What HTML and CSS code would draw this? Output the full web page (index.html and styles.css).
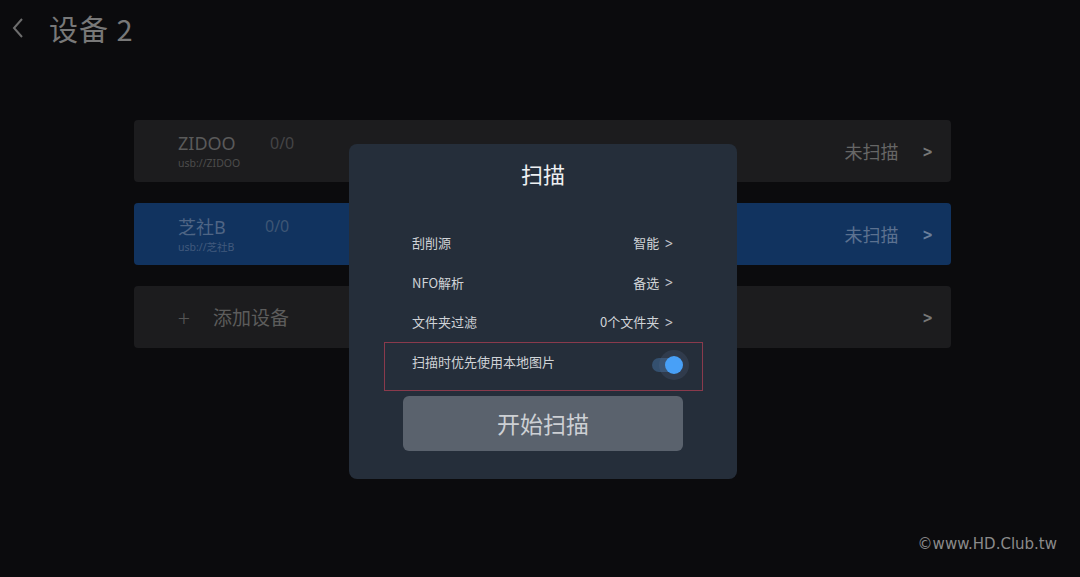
FILE: index.html
```html
<!DOCTYPE html>
<html lang="zh">
 <head>
  <meta charset="utf-8">
  <title>设备 2</title>
  <link rel="stylesheet" href="styles.css">
 </head>
 <body>
  <div class="header">
   <svg class="back" width="14" height="22" viewBox="0 0 14 22">
    <path d="M11 2 L3 11 L11 20" fill="none" stroke="#6d6d6d" stroke-width="2"/>
   </svg>
   <span class="title">设备 2</span>
  </div>

  <div class="devices">
   <div class="device">
    <div class="name">
     <div class="line"><span class="label">ZIDOO</span><span class="count">0/0</span></div>
     <div class="path">usb://ZIDOO</div>
    </div>
    <span class="state">未扫描</span>
    <span class="arrow">&gt;</span>
   </div>
   <div class="device active">
    <div class="name">
     <div class="line"><span class="label">芝社B</span><span class="count">0/0</span></div>
     <div class="path">usb://芝社B</div>
    </div>
    <span class="state">未扫描</span>
    <span class="arrow">&gt;</span>
   </div>
   <div class="device add">
    <div class="name">
     <div class="line"><span class="plus">+</span><span class="label big">添加设备</span></div>
    </div>
    <span class="arrow">&gt;</span>
   </div>
  </div>

  <div class="dialog">
   <div class="dialogTitle">扫描</div>
   <div class="options">
    <div class="option">
     <span>刮削源</span>
     <span class="value">智能 <span class="chev">&gt;</span></span>
    </div>
    <div class="option">
     <span>NFO解析</span>
     <span class="value">备选 <span class="chev">&gt;</span></span>
    </div>
    <div class="option">
     <span>文件夹过滤</span>
     <span class="value">0个文件夹 <span class="chev">&gt;</span></span>
    </div>
   </div>
   <div class="option focused">
    <span>扫描时优先使用本地图片</span>
    <span class="toggle"><span class="knob"></span></span>
   </div>
   <div class="startBtn">开始扫描</div>
  </div>

  <div class="mark">©www.HD.Club.tw</div>
 </body>
</html>
```

FILE: styles.css
```css
    html, body {
	margin: 0px;
	height: 100%;
    }

    body {
	background-color: #0b0b0d;
	font-family: "Noto Sans CJK SC", "Noto Sans", sans-serif;
	color: #6a6a6a;
	width: 1080px;
	height: 577px;
	overflow: hidden;
	position: relative;
    }

    div.header {
	display: flex;
	align-items: center;
	height: 56px;
	padding-left: 11px;
    }

    span.title {
	margin-left: 24px;
	font-size: 29px;
	color: #787878;
	letter-spacing: 1px;
    }

    div.devices {
	margin-left: 134px;
	margin-top: 64px;
	width: 817px;
	display: flex;
	flex-direction: column;
	gap: 21px;
    }

    div.device {
	height: 62px;
	border-radius: 4px;
	background-color: #1c1c1e;
	display: flex;
	align-items: center;
	padding-left: 44px;
	padding-right: 17px;
    }

    div.device.active {
	background-color: #11335f;
    }

    div.name {
	flex: 1;
    }

    div.line {
	display: flex;
	align-items: center;
	height: 22px;
    }

    span.label {
	font-family: "Noto Sans", "Noto Sans CJK SC", sans-serif;
	font-size: 18px;
	color: #5a5a5a;
	width: 92px;
    }

    div.active span.label {
	color: #4f6585;
	width: 87px;
    }

    span.count {
	font-family: "Noto Sans", sans-serif;
	font-size: 16px;
	color: #444446;
    }

    div.active span.count {
	color: #3e5675;
    }

    div.path {
	font-family: "Noto Sans", "Noto Sans CJK SC", sans-serif;
	font-size: 10.5px;
	color: #4c4c4c;
	margin-top: 2px;
    }

    div.active div.path {
	color: #415a7d;
    }

    span.plus {
	font-size: 22px;
	font-weight: 300;
	color: #555;
	width: 35px;
    }

    span.label.big {
	font-size: 19px;
	width: auto;
	color: #5c5c5c;
    }

    span.state {
	font-size: 18px;
	color: #666;
	margin-right: 22px;
    }

    div.active span.state {
	color: #5c7190;
    }

    span.arrow {
	font-family: "DejaVu Sans", sans-serif;
	font-size: 16px;
	font-weight: bold;
	color: #777;
	transform: scaleX(0.8);
    }

    div.active span.arrow {
	color: #6a7f9c;
    }

    div.dialog {
	position: absolute;
	left: 349px;
	top: 144px;
	width: 388px;
	height: 335px;
	box-sizing: border-box;
	border-radius: 8px;
	background-color: #252e3a;
	padding-top: 14px;
    }

    div.dialogTitle {
	text-align: center;
	font-size: 22px;
	color: #eef0f2;
	height: 30px;
	line-height: 30px;
    }

    div.options {
	margin-top: 35px;
	padding-left: 63px;
	padding-right: 62px;
    }

    div.option {
	display: flex;
	justify-content: space-between;
	align-items: center;
	height: 39.5px;
	font-size: 13px;
	color: #d0d3d7;
    }

    span.value {
	display: flex;
	align-items: center;
	gap: 4px;
    }

    span.chev {
	font-family: "DejaVu Sans", sans-serif;
	font-size: 14px;
	transform: scaleX(0.75);
	color: #c0c3c8;
    }

    div.option.focused {
	margin-left: 35px;
	margin-right: 34px;
	height: 49px;
	box-sizing: border-box;
	border: 1px solid #8a3a4c;
	padding-left: 27px;
	padding-right: 24px;
	padding-bottom: 10px;
    }

    span.toggle {
	position: relative;
	width: 26px;
	height: 14px;
	border-radius: 7px;
	background-color: #34506f;
	margin-top: 8px;
    }

    span.knob {
	position: absolute;
	right: -5px;
	top: -2px;
	width: 18px;
	height: 18px;
	border-radius: 50%;
	background-color: #48a0f7;
	box-shadow: 0px 0px 0px 6px rgba(90, 110, 140, 0.22);
    }

    div.startBtn {
	margin-left: 54px;
	margin-right: 54px;
	margin-top: 5px;
	height: 55px;
	border-radius: 6px;
	background-color: #5a626d;
	color: #cdd0d4;
	font-size: 23px;
	display: flex;
	align-items: center;
	justify-content: center;
    }

    div.mark {
	position: absolute;
	right: 23px;
	bottom: 24px;
	font-family: "DejaVu Sans", sans-serif;
	font-size: 15px;
	color: #8a8a8a;
    }
```
